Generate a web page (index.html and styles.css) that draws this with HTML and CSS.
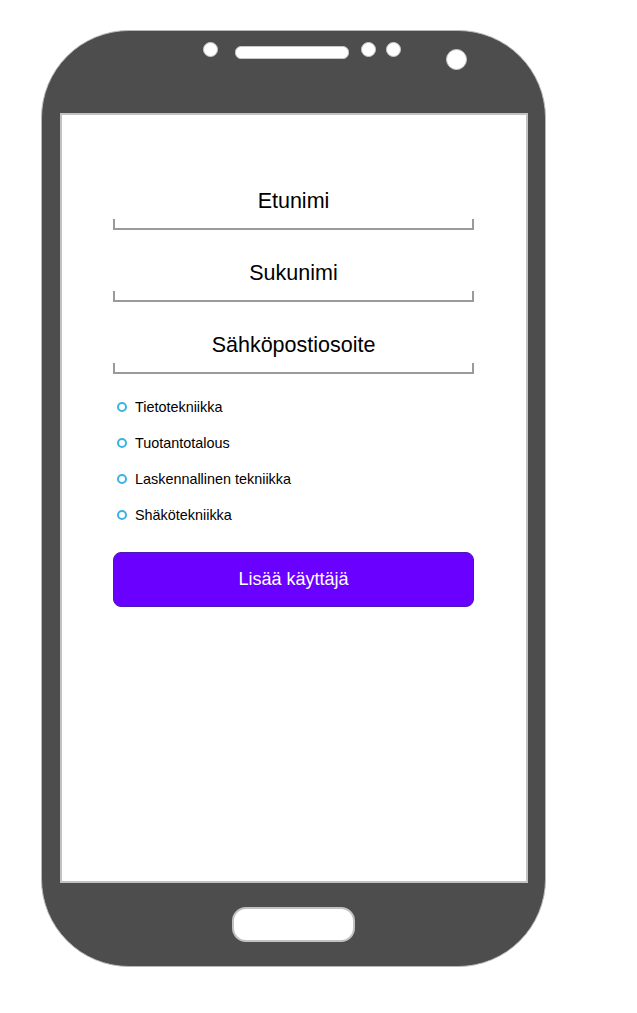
FILE: index.html
```html
<!DOCTYPE html>
<html lang="fi">
<head>
<meta charset="UTF-8">
<meta name="viewport" content="width=device-width, initial-scale=1.0">
<title>Lisää käyttäjä</title>
<link rel="stylesheet" href="styles.css">
</head>
<body>

<div class="phone">
  <div class="phone-top">
    <span class="dot"></span>
    <span class="speaker"></span>
    <span class="dot dot-2"></span>
    <span class="dot dot-3"></span>
    <span class="camera"></span>
  </div>

  <div class="screen">
    <form class="user-form">
      <div class="field">
        <div class="field-label">Etunimi</div>
        <div class="field-line"></div>
      </div>
      <div class="field">
        <div class="field-label">Sukunimi</div>
        <div class="field-line"></div>
      </div>
      <div class="field">
        <div class="field-label">Sähköpostiosoite</div>
        <div class="field-line"></div>
      </div>

      <ul class="options">
        <li><span class="radio"></span>Tietotekniikka</li>
        <li><span class="radio"></span>Tuotantotalous</li>
        <li><span class="radio"></span>Laskennallinen tekniikka</li>
        <li><span class="radio"></span>Shäkötekniikka</li>
      </ul>

      <div class="add-button">Lisää käyttäjä</div>
    </form>
  </div>

  <div class="phone-bottom">
    <span class="home-button"></span>
  </div>
</div>

</body>
</html>
```

FILE: styles.css
```css
body {
  margin: 0;
  padding: 0;
  background-color: #fff;
  font-family: 'Liberation Sans', Arial, sans-serif;
  color: #000;
}
.phone {
  box-sizing: border-box;
  width: 505px;
  height: 937px;
  margin: 30px 0 0 41px;
  background-color: #4d4d4d;
  border: 1px solid #b8b8b8;
  border-radius: 88px;
  display: flex;
  flex-direction: column;
}
/* Top sensors */
.phone-top {
  height: 82px;
  display: flex;
  align-items: flex-start;
  padding-left: 161px;
}
.dot {
  box-sizing: border-box;
  width: 15px;
  height: 15px;
  margin-top: 11px;
  border-radius: 50%;
  background-color: #fff;
  border: 1px solid #c8c8c8;
}
.speaker {
  box-sizing: border-box;
  width: 114px;
  height: 13px;
  margin: 15px 0 0 17px;
  border-radius: 6px;
  background-color: #fff;
  border: 1px solid #c8c8c8;
}
.dot-2 {
  margin-left: 12px;
}
.dot-3 {
  margin-left: 10px;
}
.camera {
  box-sizing: border-box;
  width: 21px;
  height: 21px;
  margin: 18px 0 0 45px;
  border-radius: 50%;
  background-color: #fff;
  border: 1px solid #c8c8c8;
}
/* Screen */
.screen {
  box-sizing: border-box;
  height: 770px;
  margin: 0 17px 0 18px;
  padding-left: 51px;
  background-color: #fff;
  border: 2px solid #c2c2c2;
}
.user-form {
  width: 361px;
  padding-top: 74px;
}
.field {
  margin-bottom: 31px;
}
.field-label {
  font-size: 21.5px;
  line-height: 23px;
  padding-top: 1px;
  text-align: center;
}
.field-line {
  box-sizing: border-box;
  height: 11px;
  margin-top: 6px;
  border: 2px solid #9a9a9a;
  border-top: none;
}
.options {
  list-style-type: none;
  margin: -16px 0 0 0;
  padding: 0 0 0 4px;
}
.options li {
  display: flex;
  align-items: center;
  height: 36px;
  font-size: 14.4px;
}
.radio {
  box-sizing: border-box;
  width: 10px;
  height: 10px;
  margin-right: 8px;
  border: 2px solid #3cb2e4;
  border-radius: 50%;
}
.add-button {
  box-sizing: border-box;
  height: 55px;
  margin-top: 19px;
  background-color: #6a00ff;
  border: 1px solid #4a18b8;
  border-radius: 8px;
  color: #fff;
  font-size: 18px;
  display: flex;
  align-items: center;
  justify-content: center;
}
/* Bottom */
.phone-bottom {
  flex: 1;
  display: flex;
  justify-content: center;
  padding-top: 24px;
}
.home-button {
  box-sizing: border-box;
  width: 123px;
  height: 35px;
  border-radius: 14px;
  background-color: #fff;
  border: 2px solid #c2c2c2;
}
```
